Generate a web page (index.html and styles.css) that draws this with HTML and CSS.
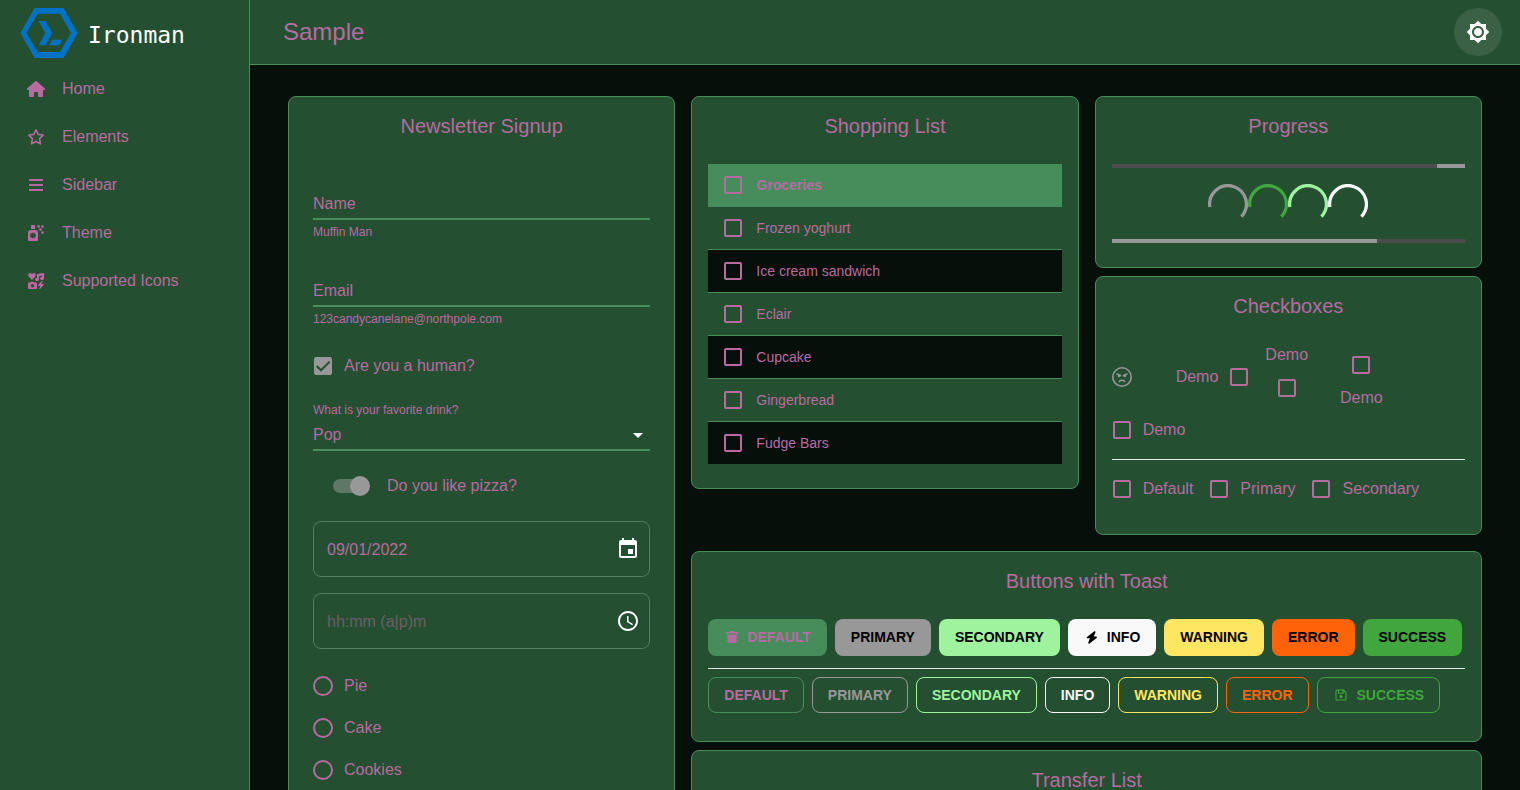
FILE: index.html
```html
<!DOCTYPE html>
<html lang="en">
<head>
<meta charset="utf-8">
<meta name="viewport" content="width=device-width, initial-scale=1">
<title>Sample</title>
<link rel="stylesheet" href="styles.css">
</head>
<body>
<div class="app">
  <aside class="sidebar">
    <a class="brand" href="#">
      <svg class="brand-mark" viewBox="62 24 172 150" aria-hidden="true"><path fill-rule="evenodd" d="M62 99 105 24H191L234 99 191 174H105ZM80 99 114 156H181L214 99 181 41H114Z"/><path d="M116 63H137L158 99 137 136H117L137 99ZM158 119H187L178 136H148Z"/></svg>
      <span class="brand-name">Ironman</span>
    </a>
    <nav class="nav">
      <a class="nav-link" href="#"><span class="nav-icon"><svg width="18" height="16" viewBox="0 0 576 512"><path d="M575.8 255.5c0 18-15 32.1-32 32.1h-32l.7 160.2c0 2.7-.2 5.4-.5 8.1V472c0 22.1-17.9 40-40 40H392c-22.100 0-40-17.900-40-40V384c0-17.700-14.300-32-32-32H256c-17.700 0-32 14.300-32 32v88c0 22.100-17.900 40-40 40H104c-22.100 0-40-17.900-40-40V287.600H32c-18 0-32-14-32-32.100 0-9 3-17 10-24L266.400 8c7-7 15-8 22-8s15 2 21 7L564.800 231.500c8 7 12 15 11 24z"/></svg></span>Home</a>
      <a class="nav-link" href="#"><span class="nav-icon"><svg width="18" height="16" viewBox="0 0 18 16"><path class="stroke" d="M9 .9 11.200 5.400 16.200 6.100 12.600 9.600 13.500 14.900 9 12.500 4.500 14.900 5.400 9.600 1.800 6.100 6.800 5.400Z"/></svg></span>Elements</a>
      <a class="nav-link" href="#"><span class="nav-icon"><svg width="14" height="16" viewBox="0 0 14 16"><path d="M0 2h14v2H0zM0 7h14v2H0zM0 12h14v2H0z"/></svg></span>Sidebar</a>
      <a class="nav-link" href="#"><span class="nav-icon"><svg width="16" height="16" viewBox="0 0 16 16"><path fill-rule="evenodd" d="M3 1a1 1 0 0 1 1-1h2a1 1 0 0 1 1 1v3H3zM0 8a3 3 0 0 1 3-3h4a3 3 0 0 1 3 3v7a1 1 0 0 1-1 1H1a1 1 0 0 1-1-1zM5 7.700a2.800 2.800 0 1 0 0 5.600 2.800 2.800 0 0 0 0-5.600z"/><path d="m10.500 0 .6 .9.900.6-.9.600-.6.900-.6-.9-.9-.6.900-.6zM14.500 0l.6.900.900.600-.9.600-.6.900-.6-.9-.9-.6.900-.6zM12.500 3l.6.900.900.600-.9.600-.6.900-.6-.9-.9-.6.900-.6zM14.500 6l.6.900.900.600-.9.600-.6.900-.6-.9-.9-.6.900-.6z" stroke="currentColor" stroke-width=".5"/></svg></span>Theme</a>
      <a class="nav-link" href="#"><span class="nav-icon"><svg width="16" height="16" viewBox="0 0 16 16"><path fill-rule="evenodd" d="M4 6.900.7 3.600C-.2 2.700-.1 1.100.9.400 1.800-.3 3 0 3.700.7L4 1l.3-.3C5-.1 6.300-.2 7.100.5c1 .8 1 2.300.1 3.200zM15 0a1 1 0 0 1 1 1v4.500c0 .9-.9 1.500-2 1.500s-2-.7-2-1.500S12.900 4 14 4V2.500l-3 1v3c0 .9-.9 1.500-2 1.500s-2-.7-2-1.500S7.900 5 9 5V2a1 1 0 0 1 .7-1zM2.500 9.500 3 8.700h3l.5.800H8a1 1 0 0 1 1 1V15a1 1 0 0 1-1 1H1a1 1 0 0 1-1-1v-4.500a1 1 0 0 1 1-1zM4.500 11a1.700 1.700 0 1 0 0 3.400 1.700 1.700 0 0 0 0-3.400z"/><path d="m14.800 8-1.300 3h2.100c.4 0 .5.400.2.700L12 15.900c-.4.300-.8 0-.7-.4l1.100-2.600h-2c-.4 0-.6-.5-.3-.8l3.800-4.200c.4-.4 1.100-.3.900.1z"/></svg></span>Supported Icons</a>
    </nav>
  </aside>

  <div class="page">
    <header class="topbar">
      <h1 class="topbar-title">Sample</h1>
      <button class="theme-toggle" type="button" aria-label="Toggle theme"><svg width="24" height="24" viewBox="0 0 24 24"><path d="M20 8.690V4h-4.690L12 .69 8.690 4H4v4.690L.69 12 4 15.310V20h4.690L12 23.310 15.310 20H20v-4.690L23.310 12 20 8.690zM12 18c-3.310 0-6-2.690-6-6s2.690-6 6-6 6 2.690 6 6-2.690 6-6 6zm0-10c-2.210 0-4 1.790-4 4s1.790 4 4 4 4-1.790 4-4-1.790-4-4-4z"/></svg></button>
    </header>

    <main class="content">
      <section class="card">
        <h2 class="card-title">Newsletter Signup</h2>
        <form class="signup">
          <div class="field">
            <label class="field-label" for="name">Name</label>
            <input class="field-input" id="name" type="text">
            <small class="hint">Muffin Man</small>
          </div>
          <div class="field">
            <label class="field-label" for="email">Email</label>
            <input class="field-input" id="email" type="text">
            <small class="hint">123candycanelane@northpole.com</small>
          </div>
          <label class="choice human"><span class="hit"><input class="box" type="checkbox" checked></span>Are you a human?</label>
          <div class="drink">
            <label class="hint" for="drink">What is your favorite drink?</label>
            <div class="select-wrap">
              <select class="select" id="drink"><option>Pop</option></select>
              <svg class="select-arrow" width="24" height="24" viewBox="0 0 24 24"><path d="m7 10 5 5 5-5z"/></svg>
            </div>
          </div>
          <label class="pizza"><input class="switch" type="checkbox" role="switch" checked>Do you like pizza?</label>
          <div class="pickers">
            <div class="picker">
              <input class="picker-input" type="text" aria-label="Date" value="09/01/2022">
              <button class="picker-button" type="button" aria-label="Choose date"><svg width="24" height="24" viewBox="0 0 24 24"><path d="M17 12h-5v5h5v-5zM16 1v2H8V1H6v2H5c-1.110 0-1.990.9-1.990 2L3 19c0 1.100.89 2 2 2h14c1.100 0 2-.9 2-2V5c0-1.100-.9-2-2-2h-1V1h-2zm3 18H5V8h14v11z"/></svg></button>
            </div>
            <div class="picker">
              <input class="picker-input" type="text" aria-label="Time" placeholder="hh:mm (a|p)m">
              <button class="picker-button" type="button" aria-label="Choose time"><svg width="24" height="24" viewBox="0 0 24 24"><path d="M11.990 2C6.470 2 2 6.480 2 12s4.470 10 9.990 10C17.520 22 22 17.520 22 12S17.520 2 11.990 2zM12 20c-4.420 0-8-3.580-8-8s3.580-8 8-8 8 3.580 8 8-3.580 8-8 8zM12.500 7H11v6l5.250 3.150.75-1.230-4.500-2.670z"/></svg></button>
            </div>
          </div>
          <div class="radios" role="radiogroup" aria-label="Dessert">
            <label class="choice"><span class="hit"><input class="dot" type="radio" name="dessert"></span>Pie</label>
            <label class="choice"><span class="hit"><input class="dot" type="radio" name="dessert"></span>Cake</label>
            <label class="choice"><span class="hit"><input class="dot" type="radio" name="dessert"></span>Cookies</label>
          </div>
        </form>
      </section>

      <div class="wide">
        <div class="pair">
          <section class="card">
            <h2 class="card-title">Shopping List</h2>
            <div class="card-body">
              <table class="list">
                <thead>
                  <tr><th class="pick"><input class="box" type="checkbox" aria-label="Select all"></th><th>Groceries</th></tr>
                </thead>
                <tbody>
                  <tr><td class="pick"><input class="box" type="checkbox" id="i1"></td><td><label for="i1">Frozen yoghurt</label></td></tr>
                  <tr><td class="pick"><input class="box" type="checkbox" id="i2"></td><td><label for="i2">Ice cream sandwich</label></td></tr>
                  <tr><td class="pick"><input class="box" type="checkbox" id="i3"></td><td><label for="i3">Eclair</label></td></tr>
                  <tr><td class="pick"><input class="box" type="checkbox" id="i4"></td><td><label for="i4">Cupcake</label></td></tr>
                  <tr><td class="pick"><input class="box" type="checkbox" id="i5"></td><td><label for="i5">Gingerbread</label></td></tr>
                  <tr><td class="pick"><input class="box" type="checkbox" id="i6"></td><td><label for="i6">Fudge Bars</label></td></tr>
                </tbody>
              </table>
            </div>
          </section>

          <div class="stack">
            <section class="card">
              <h2 class="card-title">Progress</h2>
              <div class="card-body">
                <div class="bar bar-end" role="progressbar" aria-label="Loading"><div class="bar-fill" style="width:8%"></div></div>
                <div class="spinners">
                  <svg class="spinner grey" viewBox="0 0 44 44"><path d="M2.050 25.200A20.200 20.200 0 1 1 36.800 35.800"/></svg>
                  <svg class="spinner green" viewBox="0 0 44 44"><path d="M2.050 25.200A20.200 20.200 0 1 1 36.800 35.800"/></svg>
                  <svg class="spinner mint" viewBox="0 0 44 44"><path d="M2.050 25.200A20.200 20.200 0 1 1 36.800 35.800"/></svg>
                  <svg class="spinner white" viewBox="0 0 44 44"><path d="M2.050 25.200A20.200 20.200 0 1 1 36.800 35.800"/></svg>
                </div>
                <div class="bar" role="progressbar" aria-label="Completed" aria-valuenow="75" aria-valuemin="0" aria-valuemax="100"><div class="bar-fill" style="width:75%"></div></div>
              </div>
            </section>

            <section class="card">
              <h2 class="card-title">Checkboxes</h2>
              <div class="card-body">
                <div class="choices">
                  <label class="choice"><span class="hit"><input class="face-input" type="checkbox" aria-label="Angry" checked><svg class="face" width="20" height="20" viewBox="0 0 20 20"><circle cx="10" cy="10" r="9.200"/><path d="M5 7 8.500 8.600M15 7l-3.500 1.600M7.400 14.300c1.300-1.500 3.900-1.500 5.200 0"/><circle class="eye" cx="7" cy="9" r="1.200"/><circle class="eye" cx="13" cy="9" r="1.200"/></svg></span></label>
                  <label class="choice before">Demo<span class="hit"><input class="box" type="checkbox"></span></label>
                  <label class="choice above">Demo<span class="hit"><input class="box" type="checkbox"></span></label>
                  <label class="choice above"><span class="hit"><input class="box" type="checkbox"></span>Demo</label>
                  <label class="choice"><span class="hit"><input class="box" type="checkbox"></span>Demo</label>
                </div>
                <hr class="rule checks-rule">
                <div class="choices">
                  <label class="choice"><span class="hit"><input class="box" type="checkbox"></span>Default</label>
                  <label class="choice"><span class="hit"><input class="box" type="checkbox"></span>Primary</label>
                  <label class="choice"><span class="hit"><input class="box" type="checkbox"></span>Secondary</label>
                </div>
              </div>
            </section>
          </div>
        </div>

        <div class="stack">
          <section class="card">
            <h2 class="card-title">Buttons with Toast</h2>
            <div class="card-body buttons-body">
              <div class="buttons">
                <button class="btn solid default" type="button"><svg class="btn-icon" viewBox="0 0 16 16"><path d="M6 1h4l.6 1H14v1.500H2V2h3.400zM3 4.500h10l-.6 7.300A1.300 1.300 0 0 1 11.100 13H4.900a1.300 1.300 0 0 1-1.300-1.200z"/></svg>DEFAULT</button>
                <button class="btn solid primary" type="button">PRIMARY</button>
                <button class="btn solid secondary" type="button">SECONDARY</button>
                <button class="btn solid info" type="button"><svg class="btn-icon" viewBox="0 0 16 16"><path d="M10 1.500 3 6.900c-.6.500-.3 1.400.4 1.400h2.500L4.300 12.600c-.3.800.7 1.400 1.300.9l7-5.600c.6-.5.3-1.400-.4-1.400H9.800l1.600-4.100c.3-.8-.7-1.400-1.400-.9z"/></svg>INFO</button>
                <button class="btn solid warning" type="button">WARNING</button>
                <button class="btn solid error" type="button">ERROR</button>
                <button class="btn solid success" type="button">SUCCESS</button>
              </div>
              <hr class="rule buttons-rule">
              <div class="buttons">
                <button class="btn outline default" type="button">DEFAULT</button>
                <button class="btn outline primary" type="button">PRIMARY</button>
                <button class="btn outline secondary" type="button">SECONDARY</button>
                <button class="btn outline info" type="button">INFO</button>
                <button class="btn outline warning" type="button">WARNING</button>
                <button class="btn outline error" type="button">ERROR</button>
                <button class="btn outline success" type="button"><svg class="btn-icon" viewBox="0 0 16 16"><path class="stroke thin" d="M4 3h6.500L13 5.500V12a1 1 0 0 1-1 1H4a1 1 0 0 1-1-1V4a1 1 0 0 1 1-1zM5.500 3v3.200h4.500V3.200"/><circle cx="8" cy="9.600" r="1.500"/></svg>SUCCESS</button>
              </div>
            </div>
          </section>
          <section class="card">
            <h2 class="card-title">Transfer List</h2>
            <div class="card-body"></div>
          </section>
        </div>
      </div>
    </main>
  </div>
</div>
</body>
</html>
```
FILE: styles.css
```css
:root {
  --surface: #245031;
  --back: #060f0a;
  --line: #478d5c;
  --soft-line: #567b60;
  --text: #b86ba1;
  --grey: #989898;
}

* { box-sizing: border-box; }

body {
  margin: 0;
  background: var(--back);
  color: var(--text);
  font: 16px/24px "Liberation Sans", Arial, sans-serif;
}

button, input, select { font: inherit; color: inherit; margin: 0; }
button { cursor: pointer; }
h1, h2 { margin: 0; font-weight: 400; }
svg { fill: currentColor; display: block; flex: none; }
.stroke { fill: none; stroke: currentColor; stroke-width: 1.5; stroke-linejoin: round; }
.thin { stroke-width: 1.1; }

.app { display: flex; height: 100vh; overflow: hidden; }

/* Sidebar */
.sidebar {
  flex: none;
  width: 250px;
  background: var(--surface);
  border-right: 1px solid var(--line);
}
.brand {
  display: flex;
  align-items: center;
  gap: 10px;
  height: 64px;
  padding: 2px 20px 0;
  color: #fff;
  text-decoration: none;
}
.brand-mark { width: 58px; height: 50px; fill: #0072c6; }
.brand-name { font: 23px/32px "DejaVu Sans Mono", monospace; padding-top: 4px; }
.nav-link {
  display: flex;
  align-items: center;
  gap: 14px;
  height: 48px;
  padding: 2px 24px 0;
  color: inherit;
  text-decoration: none;
}
.nav-icon { display: flex; justify-content: center; width: 24px; }

/* Top bar */
.page { flex: 1; min-width: 0; display: flex; flex-direction: column; }
.topbar {
  flex: none;
  display: flex;
  align-items: center;
  justify-content: space-between;
  height: 65px;
  padding: 0 18px 0 33px;
  background: var(--surface);
  border-bottom: 1px solid var(--line);
}
.topbar-title { font-size: 24px; line-height: 32px; }
.theme-toggle {
  display: grid;
  place-items: center;
  width: 48px;
  height: 48px;
  padding: 0;
  border: 0;
  border-radius: 50%;
  background: rgba(255, 255, 255, 0.1);
  color: #fff;
}

/* Content grid */
.content {
  flex: 1;
  min-height: 0;
  overflow: hidden;
  display: grid;
  grid-template-columns: repeat(3, minmax(0, 1fr));
  align-items: start;
  gap: 16px;
  padding: 31px 38px;
}
.wide { grid-column: span 2; display: grid; gap: 16px; }
.pair { display: grid; grid-template-columns: repeat(2, minmax(0, 1fr)); gap: 16px; align-items: start; }
.stack { display: grid; gap: 8px; }

.card { background: var(--surface); border: 1px solid var(--line); border-radius: 8px; }
.card-title { padding: 16px 16px 0; font-size: 20px; line-height: 27px; text-align: center; }
.card-body { padding: 24px 16px; }

/* Sign-up form */
.signup { display: flex; flex-direction: column; padding: 48px 24px 24px; }
.field { display: grid; margin-bottom: 33px; }
.field-label, .field-input { grid-area: 1 / 1; }
.field-label { line-height: 32px; pointer-events: none; }
.field-input {
  width: 100%;
  height: 32px;
  padding: 0;
  border: 0;
  border-bottom: 2px solid var(--line);
  background: none;
}
.hint { font-size: 12px; line-height: 20px; }
.field .hint { margin-top: 2px; }
.field + .human { margin-top: -17px; }
.drink { display: grid; margin: 13px 0 14px; }
.select-wrap { display: grid; align-items: center; }
.select, .select-arrow { grid-area: 1 / 1; }
.select {
  appearance: none;
  width: 100%;
  height: 31px;
  padding: 0 24px 0 0;
  border: 0;
  border-bottom: 2px solid var(--line);
  background: none;
}
.select-arrow { justify-self: end; margin-bottom: 2px; color: #fff; pointer-events: none; }

.pizza { display: flex; align-items: center; gap: 17px; height: 42px; padding-left: 20px; }
.switch {
  appearance: none;
  display: flex;
  align-items: center;
  justify-content: flex-end;
  width: 37px;
  height: 20px;
  background: url("data:image/svg+xml,%3Csvg xmlns='http://www.w3.org/2000/svg' width='34' height='14'%3E%3Crect width='34' height='14' rx='7' fill='%235e7864'/%3E%3C/svg%3E") 0 3px no-repeat;
}
.switch::before { content: ""; width: 20px; height: 20px; border-radius: 50%; background: var(--grey); }

.pickers { display: grid; gap: 16px; margin: 14px 0 16px; }
.picker {
  display: flex;
  align-items: center;
  height: 56px;
  padding: 0 9px 0 13px;
  border: 1px solid var(--soft-line);
  border-radius: 8px;
}
.picker-input { flex: 1; min-width: 0; padding: 2px 0 0; border: 0; background: none; }
.picker-input::placeholder { color: #6e5d69; opacity: 1; }
.picker-button { padding: 0; border: 0; background: none; color: #fff; }
.radios { display: grid; }

/* Check boxes and radios */
.choice { display: inline-flex; align-items: center; line-height: 22px; margin: 0 16px 0 -11px; }
.choice.before { margin: 0 -11px 0 17px; }
.choice.above { flex-direction: column; gap: 1px; margin: 0 16px; }
.choice.before + .above { margin-right: 0; }
.choice.above + .above { margin-left: 32px; }
.choices { display: flex; flex-wrap: wrap; align-items: center; }
.hit { display: grid; place-items: center; flex: none; width: 42px; height: 42px; }
.box {
  appearance: none;
  display: block;
  width: 18px;
  height: 18px;
  border: 2px solid currentColor;
  border-radius: 2px;
}
.box:checked {
  border: 0;
  background: var(--grey) url("data:image/svg+xml,%3Csvg xmlns='http://www.w3.org/2000/svg' viewBox='0 0 18 18'%3E%3Cpath d='M2.700 9 7 13.300 15.700 4.600' fill='none' stroke='%23245031' stroke-width='2'/%3E%3C/svg%3E");
}
.dot {
  appearance: none;
  width: 20px;
  height: 20px;
  border: 2px solid currentColor;
  border-radius: 50%;
}
.face-input { appearance: none; width: 20px; height: 20px; }
.face-input, .face { grid-area: 1 / 1; }
.face { fill: none; stroke: var(--grey); stroke-width: 1.6; stroke-linecap: round; }
.face .eye { fill: var(--grey); stroke: none; }

.rule { height: 1px; margin: 0; border: 0; background: #dfe8e0; }
.checks-rule { margin: 8px 0; }
.buttons-rule { margin: 12px 0 8px; }

/* Shopping list */
.list { width: 100%; border-collapse: separate; border-spacing: 0; font-size: 14px; line-height: 20px; text-align: left; }
.list th, .list td { height: 43px; padding: 0; border-bottom: 1px solid var(--line); }
.list th { background: var(--line); font-weight: 700; }
.list .pick { width: 48px; padding-left: 16px; }
.list tbody tr:nth-child(even) { background: var(--back); }
.list tbody tr:last-child td { height: 42px; border-bottom: 0; }

/* Progress */
.bar { display: flex; height: 4px; background: #4c4c4c; }
.bar-end { justify-content: flex-end; }
.bar-fill { background: var(--grey); }
.spinners { display: flex; justify-content: center; margin: 16px 0 15px; }
.spinner { width: 40px; height: 40px; fill: none; stroke: currentColor; stroke-width: 3.6; }
.grey { color: var(--grey); }
.green { color: #40a63d; }
.mint { color: #9ff39f; }
.white { color: #f9f9f9; }

/* Buttons */
.buttons-body { padding-bottom: 28px; }
.buttons { display: flex; flex-wrap: wrap; gap: 8px; }
.btn {
  --tone: var(--line);
  display: inline-flex;
  align-items: center;
  gap: 8px;
  border-radius: 8px;
  font-size: 14px;
  font-weight: 700;
}
.btn-icon { width: 16px; height: 16px; }
.solid { gap: 7px; padding: 6px 16px; border: 0; line-height: 25px; background: var(--tone); color: #000; }
.outline { padding: 5px 15px; border: 1px solid var(--tone); line-height: 24px; background: none; color: var(--tone); }
.btn.default { color: var(--text); }
.primary { --tone: #989898; }
.secondary { --tone: #9ff39f; }
.info { --tone: #f9f9f9; }
.warning { --tone: #ffe662; }
.error { --tone: #ff6309; }
.success { --tone: #40a63d; }
```
